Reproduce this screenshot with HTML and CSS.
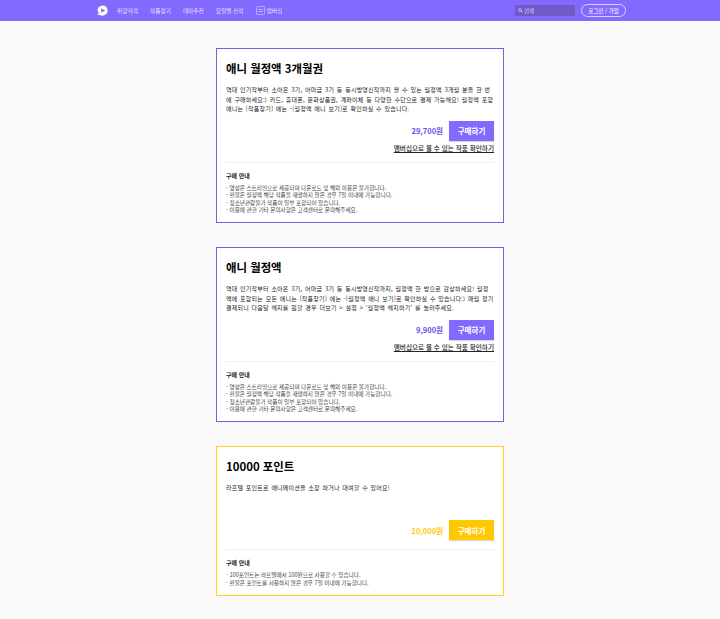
FILE: index.html
```html
<!DOCTYPE html>
<html lang="ko">
<head>
<meta charset="utf-8">
<title>라프텔 멤버십</title>
<link rel="stylesheet" href="styles.css">
</head>
<body>
<header class="topbar">
  <div class="topbar-inner">
    <svg class="logo" viewBox="0 0 12 12" width="11" height="11"><path d="M6 .5A5.5 5.5 0 1 1 1.2 8.7L.6 11.2 3 10.6 .6 6A5.5 5.5 0 0 1 6 .5Z" fill="#fff"/><path d="M4.6 3.6 9 6 4.6 8.4Z" fill="#8469ff"/></svg>
    <nav class="nav">
      <a>취향저격</a>
      <a>작품찾기</a>
      <a>테마추천</a>
      <a>요일별 신작</a>
      <a class="nav-member"><svg class="member-icon" viewBox="0 0 9 9" width="9" height="9"><rect x=".5" y=".5" width="8" height="8" rx="1" fill="none" stroke="#cfc5ff" stroke-width=".7"/><path d="M2.2 3.5h4.6M2.2 5.5h4.6" stroke="#cfc5ff" stroke-width=".8"/></svg>멤버십</a>
    </nav>
    <div class="search"><svg viewBox="0 0 6 6" width="5" height="5"><circle cx="2.5" cy="2.5" r="1.8" fill="none" stroke="#ddd6ff" stroke-width=".9"/><path d="M3.8 3.8 5.6 5.6" stroke="#ddd6ff" stroke-width=".9"/></svg><span>검색</span></div>
    <button class="login">로그인 / 가입</button>
  </div>
</header>
<main class="page">
  <section class="card card-purple">
    <h2 class="card-title">애니 월정액 3개월권</h2>
    <p class="card-desc">역대 인기작부터 소아온 3기, 어마금 3기 등 동시방영신작까지 볼 수 있는 월정액 3개월 분을 한 번에 구매하세요:) 카드, 휴대폰, 문화상품권, 계좌이체 등 다양한 수단으로 결제 가능해요! 월정액 포함 애니는 [작품찾기] 에는 -[월정액 애니 보기]로 확인하실 수 있습니다.</p>
    <div class="buy-row"><span class="price">29,700원</span><button class="buy">구매하기</button></div>
    <div class="link-row"><a class="works-link">멤버십으로 볼 수 있는 작품 확인하기</a></div>
    <div class="notice">
      <h3 class="notice-title">구매 안내</h3>
      <ul class="notice-list">
        <li>- 영상은 스트리밍으로 제공되며 다운로드 및 해외 이용은 불가합니다.</li>
        <li>- 환불은 월정액 해당 작품을 재생하지 않은 경우 7일 이내에 가능합니다.</li>
        <li>- 청소년관람불가 작품이 일부 포함되어 있습니다.</li>
        <li>- 이용에 관한 기타 문의사항은 고객센터로 문의해주세요.</li>
      </ul>
    </div>
  </section>
  <section class="card card-purple">
    <h2 class="card-title">애니 월정액</h2>
    <p class="card-desc">역대 인기작부터 소아온 3기, 어마금 3기 등 동시방영신작까지, 월정액 한 방으로 감상하세요! 월정액에 포함되는 모든 애니는 [작품찾기] 에는 -[월정액 애니 보기]로 확인하실 수 있습니다:) 매월 정기 결제되니 다음달 해지를 원할 경우 더보기 &gt; 설정 &gt; '월정액 해지하기' 를 눌러주세요.</p>
    <div class="buy-row"><span class="price">9,900원</span><button class="buy">구매하기</button></div>
    <div class="link-row"><a class="works-link">멤버십으로 볼 수 있는 작품 확인하기</a></div>
    <div class="notice">
      <h3 class="notice-title">구매 안내</h3>
      <ul class="notice-list">
        <li>- 영상은 스트리밍으로 제공되며 다운로드 및 해외 이용은 불가합니다.</li>
        <li>- 환불은 월정액 해당 작품을 재생하지 않은 경우 7일 이내에 가능합니다.</li>
        <li>- 청소년관람불가 작품이 일부 포함되어 있습니다.</li>
        <li>- 이용에 관한 기타 문의사항은 고객센터로 문의해주세요.</li>
      </ul>
    </div>
  </section>
  <section class="card card-yellow">
    <h2 class="card-title">10000 포인트</h2>
    <p class="card-desc">라프텔 포인트로 애니메이션을 소장 하거나 대여할 수 있어요!</p>
    <div class="buy-row"><span class="price">10,000원</span><button class="buy">구매하기</button></div>
    <div class="notice">
      <h3 class="notice-title">구매 안내</h3>
      <ul class="notice-list">
        <li>- 100포인트는 라프텔에서 100원으로 사용할 수 있습니다.</li>
        <li>- 환불은 포인트를 사용하지 않은 경우 7일 이내에 가능합니다.</li>
      </ul>
    </div>
  </section>
</main>
</body>
</html>
```

FILE: styles.css
```css
* { box-sizing: border-box; }
html, body { margin: 0; padding: 0; }
body {
  height: 619px;
  overflow: hidden;
  background: #f9f9f9;
  color: #1a1a1a;
  font-family: "Noto Sans CJK KR", "Noto Sans", sans-serif;
}
.topbar { height: 21px; background: #8469ff; }
.topbar-inner {
  display: flex;
  align-items: center;
  height: 21px;
  padding: 0 94px 0 97px;
}
.logo { flex: none; }
.nav {
  display: flex;
  align-items: center;
  gap: 12px;
  margin-left: 9px;
  flex: 1;
  font-size: 5.7px;
  color: #e6e0ff;
}
.nav-member { display: flex; align-items: center; gap: 2px; }
.search {
  display: flex;
  align-items: center;
  gap: 1px;
  width: 60px;
  height: 11px;
  padding-left: 3px;
  background: #6f5ac8;
  color: #ddd6ff;
  font-size: 5.5px;
}
.login {
  width: 45px;
  height: 13px;
  margin-left: 6px;
  padding: 0;
  border: 1px solid #d9d0ff;
  border-radius: 7px;
  background: transparent;
  color: #eeeaff;
  font: 500 5.5px "Noto Sans CJK KR", sans-serif;
}
.page {
  display: flex;
  flex-direction: column;
  align-items: center;
  gap: 24px;
  padding-top: 27px;
}
.card {
  display: flex;
  flex-direction: column;
  width: 288px;
  padding: 0 9px;
  background: #fff;
  border: 1px solid;
}
.card-purple { height: 175px; border-color: #7660e0; }
.card-yellow { height: 150px; border-color: #ffd21f; }
.card-title {
  margin: 11px 0 0;
  font-size: 11.4px;
  line-height: 16px;
  font-weight: 700;
  color: #000;
}
.card-desc {
  margin: 9px 0 0;
  min-height: 28px;
  font-size: 6px;
  line-height: 9.5px;
  letter-spacing: .2px;
  word-spacing: .8px;
  color: #222;
}
.card-yellow .card-desc { min-height: 30px; }
.buy-row {
  display: flex;
  align-items: center;
  justify-content: flex-end;
  gap: 6px;
  margin-top: 7px;
}
.price { font-size: 7.5px; font-weight: 700; }
.card-purple .price { color: #6a4fe8; }
.card-yellow .price { color: #ffc800; }
.buy {
  width: 45px;
  height: 20px;
  padding: 0;
  border: 0;
  color: #fff;
  font: 700 7.5px "Noto Sans CJK KR", sans-serif;
  box-shadow: 0 1px 1px rgba(0,0,0,.15);
}
.card-purple .buy { background: #8469ff; }
.card-yellow .buy { background: #ffc800; }
.link-row { display: flex; justify-content: flex-end; margin-top: 3px; }
.works-link {
  font-size: 6.6px;
  line-height: 9px;
  font-weight: 500;
  color: #222;
  text-decoration: underline;
}
.notice { margin-top: 9px; padding-top: 8px; border-top: 1px solid #f0f0f0; }
.card-yellow .notice { margin-top: 9px; }
.notice-title {
  margin: 0 0 5px;
  font-size: 6px;
  line-height: 9px;
  font-weight: 700;
  color: #222;
}
.notice-list {
  margin: 0;
  padding: 0;
  list-style: none;
  font-size: 5.6px;
  line-height: 7.6px;
  color: #444;
}
```
